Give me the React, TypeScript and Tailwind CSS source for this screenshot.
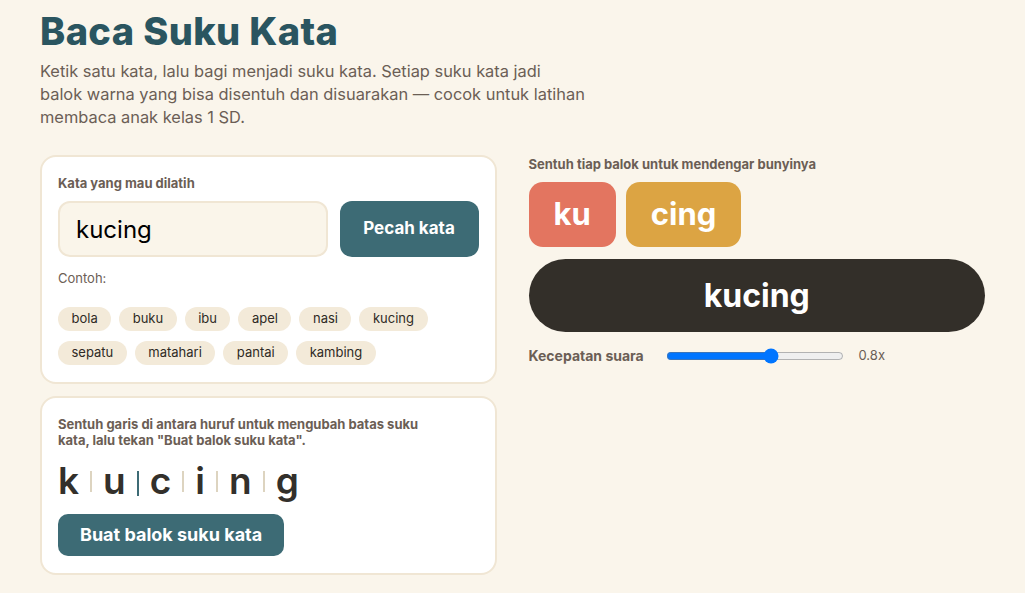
import React, { useState } from 'react';

const CONTOH = ['bola', 'buku', 'ibu', 'apel', 'nasi', 'kucing', 'sepatu', 'matahari', 'pantai', 'kambing'];
const WARNA = ['bg-[#e37560]', 'bg-[#dca443]', 'bg-[#5b9aa0]', 'bg-[#8fae6a]'];

const App: React.FC = () => {
    const [kata, setKata] = useState('kucing');
    const [batas, setBatas] = useState<boolean[]>([false, true, false, false, false]);
    const [speed, setSpeed] = useState(0.8);

    // build syllables from the boundaries
    const suku: string[] = [];
    let cur = '';
    kata.split('').forEach((h, i) => {
        cur += h;
        if (batas[i] || i === kata.length - 1) {
            suku.push(cur);
            cur = '';
        }
    });

    return (
        <div className="min-h-screen bg-[#faf5eb] px-10 pt-2 pb-5 font-['Inter',sans-serif] text-[#33302b]">
            <h1 className="text-[38px] font-extrabold leading-tight text-[#2a5560] tracking-[0.01em]">Baca Suku Kata</h1>
            <p className="mt-1 max-w-[560px] text-[16.4px] leading-[23px] text-[#6b5e55]">
                Ketik satu kata, lalu bagi menjadi suku kata. Setiap suku kata jadi<br />
                balok warna yang bisa disentuh dan disuarakan — cocok untuk latihan<br />
                membaca anak kelas 1 SD.
            </p>

            <div className="mt-[26px] grid grid-cols-2 gap-8">
                {/* Left column */}
                <div className="flex flex-col gap-[12px]">
                    <div className="rounded-2xl border-2 border-[#f0e6d4] bg-white px-4 pt-[17px] pb-[17px]">
                        <div className="text-[13px] font-bold text-[#6b5e55]">Kata yang mau dilatih</div>
                        <div className="mt-[8px] flex gap-3">
                            <input
                                value={kata}
                                onChange={e => setKata(e.target.value)}
                                className="h-[56px] w-0 min-w-0 flex-1 rounded-xl border-2 border-[#f0e6d4] bg-[#faf5ea] px-4 text-[24px] text-black outline-none"
                            />
                            <button className="h-[56px] w-[139px] shrink-0 rounded-xl bg-[#3d6b75] text-[17px] font-bold text-white">Pecah kata</button>
                        </div>
                        <div className="mt-[12px] text-[13px] text-[#6b5e55]">Contoh:</div>
                        <div className="mt-[18px] flex flex-wrap gap-x-2 gap-y-[10px]">
                            {CONTOH.map(c => (
                                <button key={c} onClick={() => setKata(c)} className="h-6 rounded-full bg-[#f3ead9] px-[13.5px] text-[13px] text-[#2f2a25]">{c}</button>
                            ))}
                        </div>
                    </div>

                    <div className="rounded-2xl border-2 border-[#f0e6d4] bg-white px-4 pt-[18px] pb-[17px]">
                        <div className="max-w-[372px] text-[13px] font-bold leading-4 text-[#6b5e55]">
                            Sentuh garis di antara huruf untuk mengubah batas suku kata, lalu tekan "Buat balok suku kata".
                        </div>
                        <div className="mt-[12px] flex h-[42px] items-start">
                            {kata.split('').map((h, i) => (
                                <React.Fragment key={i}>
                                    <span className="text-[37px] font-semibold leading-[42px] text-[#33302b]">{h}</span>
                                    {i < kata.length - 1 && (
                                        <button
                                            onClick={() => setBatas(b => b.map((v, j) => (j === i ? !v : v)))}
                                            className="mt-[11px] flex h-[25px] w-[24px] items-start justify-center"
                                        >
                                            <span className={`w-[2px] ${batas[i] ? 'h-[25px] bg-[#3d6b75]' : 'h-[21px] bg-[#ddd4c0]'}`}></span>
                                        </button>
                                    )}
                                </React.Fragment>
                            ))}
                        </div>
                        <button className="mt-[12px] h-[42px] rounded-[10px] bg-[#3d6b75] px-[22px] text-[18px] font-bold text-white">Buat balok suku kata</button>
                    </div>
                </div>

                {/* Right column */}
                <div>
                    <div className="text-[13px] font-bold text-[#6b5e55]">Sentuh tiap balok untuk mendengar bunyinya</div>
                    <div className="mt-[8px] flex gap-[10px]">
                        {suku.map((s, i) => (
                            <button key={i} className={`h-[65px] rounded-[14px] px-[25px] text-[31px] font-bold text-white ${WARNA[i % WARNA.length]}`}>{s}</button>
                        ))}
                    </div>
                    <button className="mt-3 flex h-[73px] w-full items-center justify-center rounded-full bg-[#332f29] text-[32px] font-bold text-white">{kata}</button>
                    <div className="mt-[13px] flex items-center">
                        <span className="w-[137px] text-[14px] font-bold text-[#6b5e55]">Kecepatan suara</span>
                        <input
                            type="range"
                            min="0.5"
                            max="1"
                            step="0.1"
                            value={speed}
                            onChange={e => setSpeed(parseFloat(e.target.value))}
                            className="w-[178px]"
                        />
                        <span className="ml-[15px] text-[13px] text-[#6b5e55]">{speed.toFixed(1)}x</span>
                    </div>
                </div>
            </div>
        </div>
    );
};

export default App;
